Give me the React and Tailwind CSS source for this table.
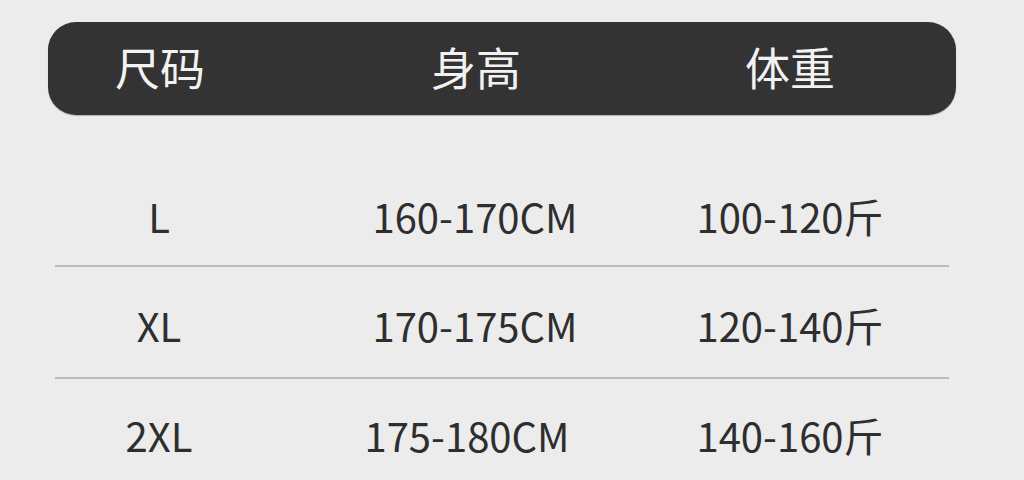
const ROWS = [
  { size: 'L', height: '160-170CM', weight: '100-120斤', pt: 'pt-[11px]' },
  { size: 'XL', height: '170-175CM', weight: '120-140斤', pt: 'pt-[6px]' },
  { size: '2XL', height: '175-180CM', weight: '140-160斤', pt: 'pt-[0px]', shift: true },
]

const FONT = { fontFamily: '"Noto Sans CJK SC", "Noto Sans", sans-serif' }

export default function App() {
  return (
    <div className="w-[1024px] h-[480px] overflow-hidden bg-[#ececec]" style={FONT}>
      <div className="pt-[22px] pl-[48px] w-[956px]">
        {/* header bar */}
        <div className="h-[93px] rounded-[28px] bg-[#333333] grid grid-cols-[224px_408px_220px_1fr] items-center text-[45px] text-[#f2f2f2] leading-none shadow-[0_1px_1px_rgba(0,0,0,0.25)]">
          <div className="text-center pb-[4px]">尺码</div>
          <div className="text-center pb-[4px]">身高</div>
          <div className="text-center pb-[4px]">体重</div>
          <div />
        </div>

        {/* rows */}
        <div className="mt-[40px] px-[7px]">
          {ROWS.map((r, i) => (
            <div key={r.size}
                 className={`h-[112px] grid grid-cols-[208px_424px_206px_1fr] items-center text-[40px] text-[#2e2e2e] leading-none ${r.pt} ${i < ROWS.length - 1 ? 'border-b-2 border-[#b8bcc0]' : ''}`}>
              <div className="text-center">{r.size}</div>
              <div className={`text-center ${r.shift ? 'pr-[16px]' : ''}`}>{r.height}</div>
              <div className="text-center">{r.weight}</div>
              <div />
            </div>
          ))}
        </div>
      </div>
    </div>
  )
}
